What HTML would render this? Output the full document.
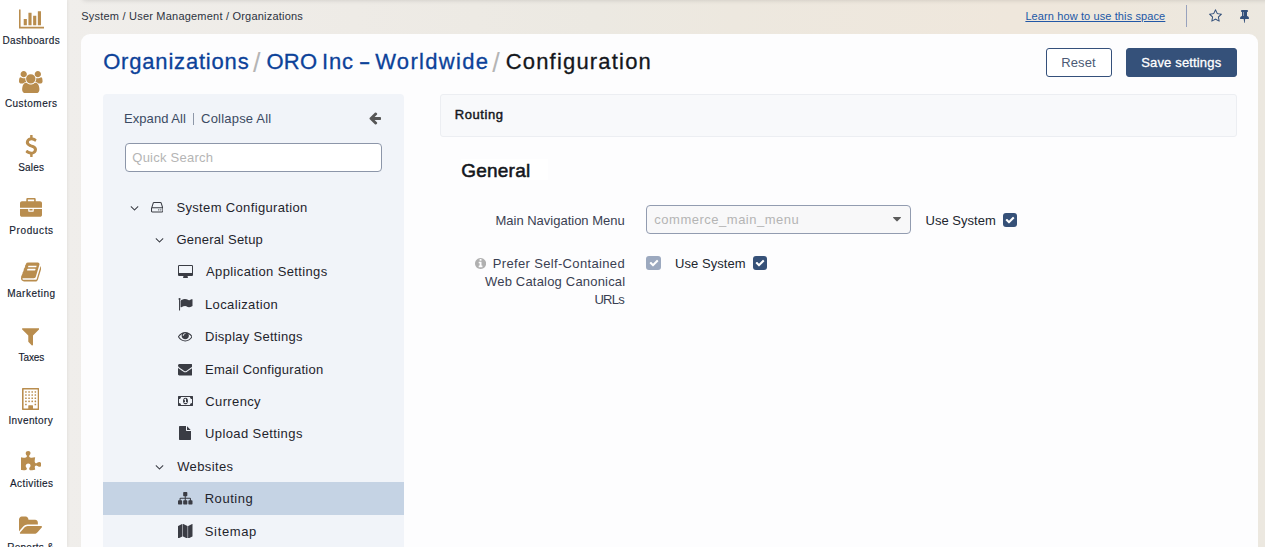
<!DOCTYPE html><html lang="en"><head>
<meta charset="utf-8">
<title>Configuration - ORO Inc - Worldwide - Organizations - User Management - System</title>
<style>
*{box-sizing:border-box;margin:0;padding:0}
html,body{width:1265px;height:547px;overflow:hidden}
body{font-family:"Liberation Sans", sans-serif;font-size:13px;color:#21262e;background:linear-gradient(90deg,#f0eeeb 5%,#eeebe6 28%,#ece9e2 47%,#ede8df 58%,#efe7dc 80%,#eee7dc 88%,#ece8e0 100%);position:relative}
.i{display:block;fill:currentColor;position:absolute}
.t{position:absolute;white-space:nowrap;line-height:18px;font-size:13px;font-weight:400}
a{text-decoration:none;color:inherit}
/* ---------- side menu ---------- */
#side{position:absolute;left:0;top:0;width:67px;height:547px;background:#fff;box-shadow:1px 0 3px rgba(0,0,0,.05);z-index:3}
#side .i{color:#b98d4e}
#side .t{font-size:10px;line-height:14px;color:#161c30;-webkit-text-stroke:.15px}
/* ---------- top bar ---------- */
#topshadow{position:absolute;left:83px;top:-10px;right:-20px;height:10px;background:#ddd;box-shadow:0 0 5px rgba(0,0,0,.16);z-index:1}
#crumbs{font-size:11px;line-height:14px;color:#2d3340}
#help{font-size:11px;line-height:14px;color:#2257a6;text-decoration:underline}
#vdiv{position:absolute;left:1186px;top:5px;width:1px;height:22px;background:#98a2bd}
#star,#pin{color:#33507b}
/* ---------- card ---------- */
#card{position:absolute;left:81px;top:34px;width:1177px;height:520px;background:#fdfdfe;border-radius:9px 9px 0 0}
#title .t{font-size:22px;line-height:30px;color:#14171c;-webkit-text-stroke:.3px}
#title a.t{color:#0c4299}
#title i.t{font-style:normal;color:#b5b5b5;font-size:27px;-webkit-text-stroke:0}
.btn{position:absolute;top:14px;height:29px;border-radius:3px}
#reset{left:965px;width:66px;border:1px solid #34507b;background:#fff}
#reset .t{color:#4b5a75}
#save{left:1045px;width:111px;border:1px solid #35517a;background:#35517a}
#save .t{color:#fff;-webkit-text-stroke:.3px}
/* ---------- left tree ---------- */
#tree{position:absolute;left:22px;top:60px;width:301px;height:470px;background:#f1f4f9;border-radius:4px 4px 0 0;overflow:hidden}
#tree .acts{color:#3b4a63}
#tree .bar{position:absolute;left:90px;top:18.5px;width:1px;height:12px;background:#8d97a8}
#tree .back .i{color:#565656}
#qs{position:absolute;left:22px;top:49px;width:257px;height:29px;border:1px solid #8c96a9;border-radius:4px;background:#fff}
#qs .t{color:#b5b5b5}
.sel{position:absolute;left:0;top:388px;width:301px;height:33px;background:#c5d3e4}
#tree .i{color:#3a3c44}
#tree .row{color:#1f242c}
/* ---------- right content ---------- */
#sect{position:absolute;left:359px;top:60px;width:797px;height:43px;background:#f8f9fb;border:1px solid #eceef2;border-radius:3px}
#secth{font-weight:400;-webkit-text-stroke:.45px #14171c;color:#14171c}
#gen{position:absolute;left:380px;top:125px;width:87px;height:21px;background:#fff}
#genh{font-size:19px;line-height:26px;font-weight:400;-webkit-text-stroke:.55px #14171c;color:#14171c}
.lbl{color:#3a3f52}
#sel{position:absolute;left:565px;top:171px;width:265px;height:29px;border:1px solid #929cb0;border-radius:4px;background:#f8f8f9}
#sel .t{color:#b4b4b4}
#sel .i{color:#5c5c5c}
.us{color:#21262e}
.cb{position:absolute;width:14px;height:14px;border-radius:3px;background:#365178;color:#fff}
.cb.dis{background:#9ca9bf}
#info{color:#b0b0b0}
</style>
</head>
<body>
<div id="topshadow"></div>
<div id="side">
  <svg class="i" style="left:19px;top:8px" width="25.14" height="22.00" viewBox="0 -1536 2048 1792"><path transform="scale(1 -1)" d="M640 640v-512h-256v512h256zM1024 1152v-1024h-256v1024h256zM2048 0v-128h-2048v1536h128v-1408h1920zM1408 896v-768h-256v768h256zM1792 1280v-1152h-256v1152h256z"></path></svg><span class="t" style="letter-spacing: 0.37px; left: 2.4px; top: 34px;">Dashboards</span>
  <svg class="i" style="left:19px;top:71px" width="23.57" height="22.00" viewBox="0 -1536 1920 1792"><path transform="scale(1 -1)" d="M593 640q-162 -5 -265 -128h-134q-82 0 -138 40.5t-56 118.5q0 353 124 353q6 0 43.5 -21t97.5 -42.5t119 -21.5q67 0 133 23q-5 -37 -5 -66q0 -139 81 -256zM1664 3q0 -120 -73 -189.5t-194 -69.5h-874q-121 0 -194 69.5t-73 189.5q0 53 3.5 103.5t14 109t26.5 108.5 t43 97.5t62 81t85.5 53.5t111.5 20q10 0 43 -21.5t73 -48t107 -48t135 -21.5t135 21.5t107 48t73 48t43 21.5q61 0 111.5 -20t85.5 -53.5t62 -81t43 -97.5t26.5 -108.5t14 -109t3.5 -103.5zM640 1280q0 -106 -75 -181t-181 -75t-181 75t-75 181t75 181t181 75t181 -75 t75 -181zM1344 896q0 -159 -112.5 -271.5t-271.5 -112.5t-271.5 112.5t-112.5 271.5t112.5 271.5t271.5 112.5t271.5 -112.5t112.5 -271.5zM1920 671q0 -78 -56 -118.5t-138 -40.5h-134q-103 123 -265 128q81 117 81 256q0 29 -5 66q66 -23 133 -23q59 0 119 21.5t97.5 42.5 t43.5 21q124 0 124 -353zM1792 1280q0 -106 -75 -181t-181 -75t-181 75t-75 181t75 181t181 75t181 -75t75 -181z"></path></svg><span class="t" style="letter-spacing: 0.47px; left: 4.9px; top: 97px;">Customers</span>
  <svg class="i" style="left:24.5px;top:135px" width="12.57" height="22.00" viewBox="0 -1536 1024 1792"><path transform="scale(1 -1)" d="M978 351q0 -153 -99.5 -263.5t-258.5 -136.5v-175q0 -14 -9 -23t-23 -9h-135q-13 0 -22.5 9.5t-9.5 22.5v175q-66 9 -127.5 31t-101.5 44.5t-74 48t-46.5 37.5t-17.5 18q-17 21 -2 41l103 135q7 10 23 12q15 2 24 -9l2 -2q113 -99 243 -125q37 -8 74 -8q81 0 142.5 43 t61.5 122q0 28 -15 53t-33.5 42t-58.5 37.5t-66 32t-80 32.5q-39 16 -61.5 25t-61.5 26.5t-62.5 31t-56.5 35.5t-53.5 42.5t-43.5 49t-35.5 58t-21 66.5t-8.5 78q0 138 98 242t255 134v180q0 13 9.5 22.5t22.5 9.5h135q14 0 23 -9t9 -23v-176q57 -6 110.5 -23t87 -33.5 t63.5 -37.5t39 -29t15 -14q17 -18 5 -38l-81 -146q-8 -15 -23 -16q-14 -3 -27 7q-3 3 -14.5 12t-39 26.5t-58.5 32t-74.5 26t-85.5 11.5q-95 0 -155 -43t-60 -111q0 -26 8.5 -48t29.5 -41.5t39.5 -33t56 -31t60.5 -27t70 -27.5q53 -20 81 -31.5t76 -35t75.5 -42.5t62 -50 t53 -63.5t31.5 -76.5t13 -94z"></path></svg><span class="t" style="letter-spacing: 0.15px; left: 18.3px; top: 161px;">Sales</span>
  <svg class="i" style="left:20px;top:198px" width="22.00" height="22.00" viewBox="0 -1536 1792 1792"><path transform="scale(1 -1)" d="M640 1280h512v128h-512v-128zM1792 640v-480q0 -66 -47 -113t-113 -47h-1472q-66 0 -113 47t-47 113v480h672v-160q0 -26 19 -45t45 -19h320q26 0 45 19t19 45v160h672zM1024 640v-128h-256v128h256zM1792 1120v-384h-1792v384q0 66 47 113t113 47h352v160q0 40 28 68 t68 28h576q40 0 68 -28t28 -68v-160h352q66 0 113 -47t47 -113z"></path></svg><span class="t" style="letter-spacing: 0.61px; left: 9.3px; top: 224px;">Products</span>
  <svg class="i" style="left:21px;top:261px" width="20.43" height="22.00" viewBox="0 -1536 1664 1792"><path transform="scale(1 -1)" d="M1639 1058q40 -57 18 -129l-275 -906q-19 -64 -76.5 -107.5t-122.5 -43.5h-923q-77 0 -148.5 53.5t-99.5 131.5q-24 67 -2 127q0 4 3 27t4 37q1 8 -3 21.5t-3 19.5q2 11 8 21t16.5 23.5t16.5 23.5q23 38 45 91.5t30 91.5q3 10 0.5 30t-0.5 28q3 11 17 28t17 23 q21 36 42 92t25 90q1 9 -2.5 32t0.5 28q4 13 22 30.5t22 22.5q19 26 42.5 84.5t27.5 96.5q1 8 -3 25.5t-2 26.5q2 8 9 18t18 23t17 21q8 12 16.5 30.5t15 35t16 36t19.5 32t26.5 23.5t36 11.5t47.5 -5.5l-1 -3q38 9 51 9h761q74 0 114 -56t18 -130l-274 -906 q-36 -119 -71.5 -153.5t-128.5 -34.5h-869q-27 0 -38 -15q-11 -16 -1 -43q24 -70 144 -70h923q29 0 56 15.5t35 41.5l300 987q7 22 5 57q38 -15 59 -43zM575 1056q-4 -13 2 -22.5t20 -9.5h608q13 0 25.5 9.5t16.5 22.5l21 64q4 13 -2 22.5t-20 9.5h-608q-13 0 -25.5 -9.5 t-16.5 -22.5zM492 800q-4 -13 2 -22.5t20 -9.5h608q13 0 25.5 9.5t16.5 22.5l21 64q4 13 -2 22.5t-20 9.5h-608q-13 0 -25.5 -9.5t-16.5 -22.5z"></path></svg><span class="t" style="letter-spacing: 0.5px; left: 7.2px; top: 287px;">Marketing</span>
  <svg class="i" style="left:22px;top:325px" width="17.29" height="22.00" viewBox="0 -1536 1408 1792"><path transform="scale(1 -1)" d="M1403 1241q17 -41 -14 -70l-493 -493v-742q0 -42 -39 -59q-13 -5 -25 -5q-27 0 -45 19l-256 256q-19 19 -19 45v486l-493 493q-31 29 -14 70q17 39 59 39h1280q42 0 59 -39z"></path></svg><span class="t" style="letter-spacing: -0.1px; left: 18.6px; top: 351px;">Taxes</span>
  <svg class="i" style="left:22px;top:388px" width="17.29" height="22.00" viewBox="0 -1536 1408 1792"><path transform="scale(1 -1)" d="M384 224v-64q0 -13 -9.5 -22.5t-22.5 -9.5h-64q-13 0 -22.5 9.5t-9.5 22.5v64q0 13 9.5 22.5t22.5 9.5h64q13 0 22.5 -9.5t9.5 -22.5zM384 480v-64q0 -13 -9.5 -22.5t-22.5 -9.5h-64q-13 0 -22.5 9.5t-9.5 22.5v64q0 13 9.5 22.5t22.5 9.5h64q13 0 22.5 -9.5t9.5 -22.5z M640 480v-64q0 -13 -9.5 -22.5t-22.5 -9.5h-64q-13 0 -22.5 9.5t-9.5 22.5v64q0 13 9.5 22.5t22.5 9.5h64q13 0 22.5 -9.5t9.5 -22.5zM384 736v-64q0 -13 -9.5 -22.5t-22.5 -9.5h-64q-13 0 -22.5 9.5t-9.5 22.5v64q0 13 9.5 22.5t22.5 9.5h64q13 0 22.5 -9.5t9.5 -22.5z M1152 224v-64q0 -13 -9.5 -22.5t-22.5 -9.5h-64q-13 0 -22.5 9.5t-9.5 22.5v64q0 13 9.5 22.5t22.5 9.5h64q13 0 22.5 -9.5t9.5 -22.5zM896 480v-64q0 -13 -9.5 -22.5t-22.5 -9.5h-64q-13 0 -22.5 9.5t-9.5 22.5v64q0 13 9.5 22.5t22.5 9.5h64q13 0 22.5 -9.5t9.5 -22.5z M640 736v-64q0 -13 -9.5 -22.5t-22.5 -9.5h-64q-13 0 -22.5 9.5t-9.5 22.5v64q0 13 9.5 22.5t22.5 9.5h64q13 0 22.5 -9.5t9.5 -22.5zM384 992v-64q0 -13 -9.5 -22.5t-22.5 -9.5h-64q-13 0 -22.5 9.5t-9.5 22.5v64q0 13 9.5 22.5t22.5 9.5h64q13 0 22.5 -9.5t9.5 -22.5z M1152 480v-64q0 -13 -9.5 -22.5t-22.5 -9.5h-64q-13 0 -22.5 9.5t-9.5 22.5v64q0 13 9.5 22.5t22.5 9.5h64q13 0 22.5 -9.5t9.5 -22.5zM896 736v-64q0 -13 -9.5 -22.5t-22.5 -9.5h-64q-13 0 -22.5 9.5t-9.5 22.5v64q0 13 9.5 22.5t22.5 9.5h64q13 0 22.5 -9.5t9.5 -22.5z M640 992v-64q0 -13 -9.5 -22.5t-22.5 -9.5h-64q-13 0 -22.5 9.5t-9.5 22.5v64q0 13 9.5 22.5t22.5 9.5h64q13 0 22.5 -9.5t9.5 -22.5zM384 1248v-64q0 -13 -9.5 -22.5t-22.5 -9.5h-64q-13 0 -22.5 9.5t-9.5 22.5v64q0 13 9.5 22.5t22.5 9.5h64q13 0 22.5 -9.5t9.5 -22.5z M1152 736v-64q0 -13 -9.5 -22.5t-22.5 -9.5h-64q-13 0 -22.5 9.5t-9.5 22.5v64q0 13 9.5 22.5t22.5 9.5h64q13 0 22.5 -9.5t9.5 -22.5zM896 992v-64q0 -13 -9.5 -22.5t-22.5 -9.5h-64q-13 0 -22.5 9.5t-9.5 22.5v64q0 13 9.5 22.5t22.5 9.5h64q13 0 22.5 -9.5t9.5 -22.5z M640 1248v-64q0 -13 -9.5 -22.5t-22.5 -9.5h-64q-13 0 -22.5 9.5t-9.5 22.5v64q0 13 9.5 22.5t22.5 9.5h64q13 0 22.5 -9.5t9.5 -22.5zM1152 992v-64q0 -13 -9.5 -22.5t-22.5 -9.5h-64q-13 0 -22.5 9.5t-9.5 22.5v64q0 13 9.5 22.5t22.5 9.5h64q13 0 22.5 -9.5t9.5 -22.5z M896 1248v-64q0 -13 -9.5 -22.5t-22.5 -9.5h-64q-13 0 -22.5 9.5t-9.5 22.5v64q0 13 9.5 22.5t22.5 9.5h64q13 0 22.5 -9.5t9.5 -22.5zM1152 1248v-64q0 -13 -9.5 -22.5t-22.5 -9.5h-64q-13 0 -22.5 9.5t-9.5 22.5v64q0 13 9.5 22.5t22.5 9.5h64q13 0 22.5 -9.5t9.5 -22.5z M896 -128h384v1536h-1152v-1536h384v224q0 13 9.5 22.5t22.5 9.5h320q13 0 22.5 -9.5t9.5 -22.5v-224zM1408 1472v-1664q0 -26 -19 -45t-45 -19h-1280q-26 0 -45 19t-19 45v1664q0 26 19 45t45 19h1280q26 0 45 -19t19 -45z"></path></svg><span class="t" style="letter-spacing: 0.4px; left: 8.4px; top: 414px;">Inventory</span>
  <svg class="i" style="left:20.5px;top:451px" width="20.43" height="22.00" viewBox="0 -1536 1664 1792"><path transform="scale(1 -1)" d="M1664 438q0 -81 -44.5 -135t-123.5 -54q-41 0 -77.5 17.5t-59 38t-56.5 38t-71 17.5q-110 0 -110 -124q0 -39 16 -115t15 -115v-5q-22 0 -33 -1q-34 -3 -97.5 -11.5t-115.5 -13.5t-98 -5q-61 0 -103 26.5t-42 83.5q0 37 17.5 71t38 56.5t38 59t17.5 77.5q0 79 -54 123.5 t-135 44.5q-84 0 -143 -45.5t-59 -127.5q0 -43 15 -83t33.5 -64.5t33.5 -53t15 -50.5q0 -45 -46 -89q-37 -35 -117 -35q-95 0 -245 24q-9 2 -27.5 4t-27.5 4l-13 2q-1 0 -3 1q-2 0 -2 1v1024q2 -1 17.5 -3.5t34 -5t21.5 -3.5q150 -24 245 -24q80 0 117 35q46 44 46 89 q0 22 -15 50.5t-33.5 53t-33.5 64.5t-15 83q0 82 59 127.5t144 45.5q80 0 134 -44.5t54 -123.5q0 -41 -17.5 -77.5t-38 -59t-38 -56.5t-17.5 -71q0 -57 42 -83.5t103 -26.5q64 0 180 15t163 17v-2q-1 -2 -3.5 -17.5t-5 -34t-3.5 -21.5q-24 -150 -24 -245q0 -80 35 -117 q44 -46 89 -46q22 0 50.5 15t53 33.5t64.5 33.5t83 15q82 0 127.5 -59t45.5 -143z"></path></svg><span class="t" style="letter-spacing: 0.4px; left: 10px; top: 477px;">Activities</span>
  <svg class="i" style="left:19px;top:514.7px" width="23.57" height="22.00" viewBox="0 -1536 1920 1792"><path transform="scale(1 -1)" d="M1879 584q0 -31 -31 -66l-336 -396q-43 -51 -120.5 -86.5t-143.5 -35.5h-1088q-34 0 -60.5 13t-26.5 43q0 31 31 66l336 396q43 51 120.5 86.5t143.5 35.5h1088q34 0 60.5 -13t26.5 -43zM1536 928v-160h-832q-94 0 -197 -47.5t-164 -119.5l-337 -396l-5 -6q0 4 -0.5 12.5 t-0.5 12.5v960q0 92 66 158t158 66h320q92 0 158 -66t66 -158v-32h544q92 0 158 -66t66 -158z"></path></svg><span class="t" style="letter-spacing: 0.26px; left: 7.2px; top: 541px;">Reports &amp;</span>
</div>
<span class="t" id="crumbs" style="letter-spacing: 0.21px; left: 81.3px; top: 9px;">System / User Management / Organizations</span>
<a class="t" id="help" style="letter-spacing: 0.11px; left: 1025.4px; top: 9px;">Learn how to use this space</a>
<div id="vdiv"></div>
<div id="star"><svg class="i" style="left:1208.7px;top:9px" width="13.00" height="14.00" viewBox="0 -1536 1664 1792"><path transform="scale(1 -1)" d="M1137 532l306 297l-422 62l-189 382l-189 -382l-422 -62l306 -297l-73 -421l378 199l377 -199zM1664 889q0 -22 -26 -48l-363 -354l86 -500q1 -7 1 -20q0 -50 -41 -50q-19 0 -40 12l-449 236l-449 -236q-22 -12 -40 -12q-21 0 -31.5 14.5t-10.5 35.5q0 6 2 20l86 500 l-364 354q-25 27 -25 48q0 37 56 46l502 73l225 455q19 41 49 41t49 -41l225 -455l502 -73q56 -9 56 -46z"></path></svg></div>
<div id="pin"><svg class="i" style="left:1239.7px;top:9px" width="9.00" height="14.00" viewBox="0 -1536 1152 1792"><path transform="scale(1 -1)" d="M480 672v448q0 14 -9 23t-23 9t-23 -9t-9 -23v-448q0 -14 9 -23t23 -9t23 9t9 23zM1152 320q0 -26 -19 -45t-45 -19h-429l-51 -483q-2 -12 -10.5 -20.5t-20.5 -8.5h-1q-27 0 -32 27l-76 485h-404q-26 0 -45 19t-19 45q0 123 78.5 221.5t177.5 98.5v512q-52 0 -90 38 t-38 90t38 90t90 38h640q52 0 90 -38t38 -90t-38 -90t-90 -38v-512q99 0 177.5 -98.5t78.5 -221.5z"></path></svg></div>

<div id="card">
  <h1 id="title">
    <a class="t" style="letter-spacing: 0.81px; left: 22.2px; top: 13px;">Organizations</a>
    <i class="t" style="letter-spacing: 0px; left: 172px; top: 14px;">/</i>
    <a class="t" style="letter-spacing: 0.15px; left: 185.6px; top: 13px;">ORO</a>
    <a class="t" style="letter-spacing: 0.78px; left: 241.1px; top: 13px;">Inc</a>
    <a class="t" style="transform: scaleX(1.6); letter-spacing: 0px; left: 279.8px; top: 13px;">-</a>
    <a class="t" style="letter-spacing: 1.31px; left: 294.2px; top: 13px;">Worldwide</a>
    <i class="t" style="letter-spacing: 0px; left: 411.3px; top: 14px;">/</i>
    <span class="t" style="letter-spacing: 1.19px; left: 424.7px; top: 13px;">Configuration</span>
  </h1>
  <a class="btn" id="reset"><span class="t" style="letter-spacing: 0.11px; left: 14.2px; top: 5px;">Reset</span></a>
  <a class="btn" id="save"><span class="t" style="letter-spacing: 0.16px; left: 14.2px; top: 5px;">Save settings</span></a>

  <div id="tree">
    <div class="sel"></div>
    <a class="t acts" style="letter-spacing: 0.04px; left: 21.1px; top: 16px;">Expand All</a>
    <div class="bar"></div>
    <a class="t acts" style="letter-spacing: 0.2px; left: 98.1px; top: 16px;">Collapse All</a>
    <div class="back"><svg class="i" style="left:265.9px;top:16.5px" width="12.00" height="14.00" viewBox="0 -1536 1536 1792"><path transform="scale(1 -1)" d="M1536 640v-128q0 -53 -32.5 -90.5t-84.5 -37.5h-704l293 -294q38 -36 38 -90t-38 -90l-75 -76q-37 -37 -90 -37q-52 0 -91 37l-651 652q-37 37 -37 90q0 52 37 91l651 650q38 38 91 38q52 0 90 -38l75 -74q38 -38 38 -91t-38 -91l-293 -293h704q52 0 84.5 -37.5 t32.5 -90.5z"></path></svg></div>
    <div id="qs"><span class="t" style="letter-spacing: 0.24px; left: 6.3px; top: 5px;">Quick Search</span></div>

    <svg class="i" style="left:26.5px;top:107px" width="9.00" height="14.00" viewBox="0 -1536 1152 1792"><path transform="scale(1 -1)" d="M1075 800q0 -13 -10 -23l-466 -466q-10 -10 -23 -10t-23 10l-466 466q-10 10 -10 23t10 23l50 50q10 10 23 10t23 -10l393 -393l393 393q10 10 23 10t23 -10l50 -50q10 -10 10 -23z"></path></svg><svg class="i" style="left:47.6px;top:105.6px" width="12.43" height="14.50" viewBox="0 -1536 1536 1792"><path transform="scale(1 -1)" d="M1040 320q0 -33 -23.5 -56.5t-56.5 -23.5t-56.5 23.5t-23.5 56.5t23.5 56.5t56.5 23.5t56.5 -23.5t23.5 -56.5zM1296 320q0 -33 -23.5 -56.5t-56.5 -23.5t-56.5 23.5t-23.5 56.5t23.5 56.5t56.5 23.5t56.5 -23.5t23.5 -56.5zM1408 160v320q0 13 -9.5 22.5t-22.5 9.5 h-1216q-13 0 -22.5 -9.5t-9.5 -22.5v-320q0 -13 9.5 -22.5t22.5 -9.5h1216q13 0 22.5 9.5t9.5 22.5zM178 640h1180l-157 482q-4 13 -16 21.5t-26 8.5h-782q-14 0 -26 -8.5t-16 -21.5zM1536 480v-320q0 -66 -47 -113t-113 -47h-1216q-66 0 -113 47t-47 113v320q0 25 16 75 l197 606q17 53 63 86t101 33h782q55 0 101 -33t63 -86l197 -606q16 -50 16 -75z"></path></svg>
    <span class="t row" style="letter-spacing: 0.35px; left: 73.4px; top: 105px;">System Configuration</span>
    <svg class="i" style="left:51.5px;top:139px" width="9.00" height="14.00" viewBox="0 -1536 1152 1792"><path transform="scale(1 -1)" d="M1075 800q0 -13 -10 -23l-466 -466q-10 -10 -23 -10t-23 10l-466 466q-10 10 -10 23t10 23l50 50q10 10 23 10t23 -10l393 -393l393 393q10 10 23 10t23 -10l50 -50q10 -10 10 -23z"></path></svg>
    <span class="t row" style="letter-spacing: 0.21px; left: 73.5px; top: 137px;">General Setup</span>
    <svg class="i" style="left:75px;top:171px" width="15.00" height="14.00" viewBox="0 -1536 1920 1792"><path transform="scale(1 -1)" d="M1792 544v832q0 13 -9.5 22.5t-22.5 9.5h-1600q-13 0 -22.5 -9.5t-9.5 -22.5v-832q0 -13 9.5 -22.5t22.5 -9.5h1600q13 0 22.5 9.5t9.5 22.5zM1920 1376v-1088q0 -66 -47 -113t-113 -47h-544q0 -37 16 -77.5t32 -71t16 -43.5q0 -26 -19 -45t-45 -19h-512q-26 0 -45 19 t-19 45q0 14 16 44t32 70t16 78h-544q-66 0 -113 47t-47 113v1088q0 66 47 113t113 47h1600q66 0 113 -47t47 -113z"></path></svg>
    <span class="t row" style="letter-spacing: 0.37px; left: 103px; top: 169px;">Application Settings</span>
    <svg class="i" style="left:75px;top:202.7px" width="14.50" height="14.50" viewBox="0 -1536 1792 1792"><path transform="scale(1 -1)" d="M320 1280q0 -72 -64 -110v-1266q0 -13 -9.5 -22.5t-22.5 -9.5h-64q-13 0 -22.5 9.5t-9.5 22.5v1266q-64 38 -64 110q0 53 37.5 90.5t90.5 37.5t90.5 -37.5t37.5 -90.5zM1792 1216v-763q0 -25 -12.5 -38.5t-39.5 -27.5q-215 -116 -369 -116q-61 0 -123.5 22t-108.5 48 t-115.5 48t-142.5 22q-192 0 -464 -146q-17 -9 -33 -9q-26 0 -45 19t-19 45v742q0 32 31 55q21 14 79 43q236 120 421 120q107 0 200 -29t219 -88q38 -19 88 -19q54 0 117.5 21t110 47t88 47t54.5 21q26 0 45 -19t19 -45z"></path></svg>
    <span class="t row" style="letter-spacing: 0.37px; left: 102px; top: 202px;">Localization</span>
    <svg class="i" style="left:74.8px;top:234.7px" width="14.50" height="14.50" viewBox="0 -1536 1792 1792"><path transform="scale(1 -1)" d="M1664 576q-152 236 -381 353q61 -104 61 -225q0 -185 -131.5 -316.5t-316.5 -131.5t-316.5 131.5t-131.5 316.5q0 121 61 225q-229 -117 -381 -353q133 -205 333.5 -326.5t434.5 -121.5t434.5 121.5t333.5 326.5zM944 960q0 20 -14 34t-34 14q-125 0 -214.5 -89.5 t-89.5 -214.5q0 -20 14 -34t34 -14t34 14t14 34q0 86 61 147t147 61q20 0 34 14t14 34zM1792 576q0 -34 -20 -69q-140 -230 -376.5 -368.5t-499.5 -138.5t-499.5 139t-376.5 368q-20 35 -20 69t20 69q140 229 376.5 368t499.5 139t499.5 -139t376.5 -368q20 -35 20 -69z"></path></svg>
    <span class="t row" style="letter-spacing: 0.28px; left: 102px; top: 234px;">Display Settings</span>
    <svg class="i" style="left:74.8px;top:267.7px" width="14.50" height="14.50" viewBox="0 -1536 1792 1792"><path transform="scale(1 -1)" d="M1792 826v-794q0 -66 -47 -113t-113 -47h-1472q-66 0 -113 47t-47 113v794q44 -49 101 -87q362 -246 497 -345q57 -42 92.5 -65.5t94.5 -48t110 -24.5h1h1q51 0 110 24.5t94.5 48t92.5 65.5q170 123 498 345q57 39 100 87zM1792 1120q0 -79 -49 -151t-122 -123 q-376 -261 -468 -325q-10 -7 -42.5 -30.5t-54 -38t-52 -32.5t-57.5 -27t-50 -9h-1h-1q-23 0 -50 9t-57.5 27t-52 32.5t-54 38t-42.5 30.5q-91 64 -262 182.5t-205 142.5q-62 42 -117 115.5t-55 136.5q0 78 41.5 130t118.5 52h1472q65 0 112.5 -47t47.5 -113z"></path></svg>
    <span class="t row" style="letter-spacing: 0.26px; left: 102px; top: 267px;">Email Configuration</span>
    <svg class="i" style="left:74.5px;top:300px" width="15.00" height="14.00" viewBox="0 -1536 1920 1792"><path transform="scale(1 -1)" d="M768 384h384v96h-128v448h-114l-148 -137l77 -80q42 37 55 57h2v-288h-128v-96zM1280 640q0 -70 -21 -142t-59.5 -134t-101.5 -101t-138 -39t-138 39t-101.5 101t-59.5 134t-21 142t21 142t59.5 134t101.5 101t138 39t138 -39t101.5 -101t59.5 -134t21 -142zM1792 384 v512q-106 0 -181 75t-75 181h-1152q0 -106 -75 -181t-181 -75v-512q106 0 181 -75t75 -181h1152q0 106 75 181t181 75zM1920 1216v-1152q0 -26 -19 -45t-45 -19h-1792q-26 0 -45 19t-19 45v1152q0 26 19 45t45 19h1792q26 0 45 -19t19 -45z"></path></svg>
    <span class="t row" style="letter-spacing: 0.37px; left: 102.3px; top: 299px;">Currency</span>
    <svg class="i" style="left:75.5px;top:332px" width="12.00" height="14.00" viewBox="0 -1536 1536 1792"><path transform="scale(1 -1)" d="M1024 1024v472q22 -14 36 -28l408 -408q14 -14 28 -36h-472zM896 992q0 -40 28 -68t68 -28h544v-1056q0 -40 -28 -68t-68 -28h-1344q-40 0 -68 28t-28 68v1600q0 40 28 68t68 28h800v-544z"></path></svg>
    <span class="t row" style="letter-spacing: 0.4px; left: 102px; top: 331px;">Upload Settings</span>
    <svg class="i" style="left:51.5px;top:366px" width="9.00" height="14.00" viewBox="0 -1536 1152 1792"><path transform="scale(1 -1)" d="M1075 800q0 -13 -10 -23l-466 -466q-10 -10 -23 -10t-23 10l-466 466q-10 10 -10 23t10 23l50 50q10 10 23 10t23 -10l393 -393l393 393q10 10 23 10t23 -10l50 -50q10 -10 10 -23z"></path></svg>
    <span class="t row" style="letter-spacing: 0.37px; left: 74.2px; top: 364px;">Websites</span>
    <svg class="i" style="left:75px;top:396.7px" width="14.50" height="14.50" viewBox="0 -1536 1792 1792"><path transform="scale(1 -1)" d="M1792 288v-320q0 -40 -28 -68t-68 -28h-320q-40 0 -68 28t-28 68v320q0 40 28 68t68 28h96v192h-512v-192h96q40 0 68 -28t28 -68v-320q0 -40 -28 -68t-68 -28h-320q-40 0 -68 28t-28 68v320q0 40 28 68t68 28h96v192h-512v-192h96q40 0 68 -28t28 -68v-320 q0 -40 -28 -68t-68 -28h-320q-40 0 -68 28t-28 68v320q0 40 28 68t68 28h96v192q0 52 38 90t90 38h512v192h-96q-40 0 -68 28t-28 68v320q0 40 28 68t68 28h320q40 0 68 -28t28 -68v-320q0 -40 -28 -68t-68 -28h-96v-192h512q52 0 90 -38t38 -90v-192h96q40 0 68 -28t28 -68 z"></path></svg>
    <span class="t row" style="letter-spacing: 0.54px; left: 101.7px; top: 396px;">Routing</span>
    <svg class="i" style="left:75px;top:429.7px" width="14.50" height="14.50" viewBox="0 -1536 1792 1792"><path transform="scale(1 -1)" d="M512 1536q13 0 22.5 -9.5t9.5 -22.5v-1472q0 -20 -17 -28l-480 -256q-7 -4 -15 -4q-13 0 -22.5 9.5t-9.5 22.5v1472q0 20 17 28l480 256q7 4 15 4zM1760 1536q13 0 22.5 -9.5t9.5 -22.5v-1472q0 -20 -17 -28l-480 -256q-7 -4 -15 -4q-13 0 -22.5 9.5t-9.5 22.5v1472 q0 20 17 28l480 256q7 4 15 4zM640 1536q8 0 14 -3l512 -256q18 -10 18 -29v-1472q0 -13 -9.5 -22.5t-22.5 -9.5q-8 0 -14 3l-512 256q-18 10 -18 29v1472q0 13 9.5 22.5t22.5 9.5z"></path></svg>
    <span class="t row" style="letter-spacing: 0.64px; left: 101.8px; top: 429px;">Sitemap</span>
  </div>

  <div id="sect"></div>
  <span class="t" id="secth" style="letter-spacing: 0.57px; left: 373.8px; top: 72px;">Routing</span>
  <div id="gen"></div>
  <span class="t" id="genh" style="letter-spacing: 0.23px; left: 380.2px; top: 124px;">General</span>

  <span class="t lbl" style="letter-spacing: -0.01px; left: 414.5px; top: 178px;">Main Navigation Menu</span>
  <div id="sel"><span class="t" style="letter-spacing: 0.51px; left: 7.3px; top: 5px;">commerce_main_menu</span><svg class="i" style="left:245.5px;top:6.3px" width="8.00" height="14.00" viewBox="0 -1536 1024 1792"><path transform="scale(1 -1)" d="M1024 832q0 -26 -19 -45l-448 -448q-19 -19 -45 -19t-45 19l-448 448q-19 19 -19 45t19 45t45 19h896q26 0 45 -19t19 -45z"></path></svg></div>
  <span class="t us" style="letter-spacing: 0.02px; left: 844.5px; top: 178px;">Use System</span>
  <div class="cb" style="left:922px;top:179px"><svg class="i" style="left:2px;top:2px" width="10.00" height="10.00" viewBox="0 -1536 1792 1792"><path transform="scale(1 -1)" d="M1671 970q0 -40 -28 -68l-724 -724l-136 -136q-28 -28 -68 -28t-68 28l-136 136l-362 362q-28 28 -28 68t28 68l136 136q28 28 68 28t68 -28l294 -295l656 657q28 28 68 28t68 -28l136 -136q28 -28 28 -68z"></path></svg></div>

  <div id="info"><svg class="i" style="left:393.5px;top:222.5px" width="11.14" height="13.00" viewBox="0 -1536 1536 1792"><path transform="scale(1 -1)" d="M1024 160v160q0 14 -9 23t-23 9h-96v512q0 14 -9 23t-23 9h-320q-14 0 -23 -9t-9 -23v-160q0 -14 9 -23t23 -9h96v-320h-96q-14 0 -23 -9t-9 -23v-160q0 -14 9 -23t23 -9h448q14 0 23 9t9 23zM896 1056v160q0 14 -9 23t-23 9h-192q-14 0 -23 -9t-9 -23v-160q0 -14 9 -23 t23 -9h192q14 0 23 9t9 23zM1536 640q0 -209 -103 -385.5t-279.5 -279.5t-385.5 -103t-385.5 103t-279.5 279.5t-103 385.5t103 385.5t279.5 279.5t385.5 103t385.5 -103t279.5 -279.5t103 -385.5z"></path></svg></div>
  <span class="t lbl" style="letter-spacing: 0.34px; left: 411.8px; top: 221px;">Prefer Self-Contained</span>
  <span class="t lbl" style="letter-spacing: 0.19px; left: 404px; top: 239px;">Web Catalog Canonical</span>
  <span class="t lbl" style="letter-spacing: -0.73px; left: 513.4px; top: 257px;">URLs</span>
  <div class="cb dis" style="left:565px;top:222px;width:15px"><svg class="i" style="left:2.5px;top:2px" width="10.00" height="10.00" viewBox="0 -1536 1792 1792"><path transform="scale(1 -1)" d="M1671 970q0 -40 -28 -68l-724 -724l-136 -136q-28 -28 -68 -28t-68 28l-136 136l-362 362q-28 28 -28 68t28 68l136 136q28 28 68 28t68 -28l294 -295l656 657q28 28 68 28t68 -28l136 -136q28 -28 28 -68z"></path></svg></div>
  <span class="t us" style="letter-spacing: 0.06px; left: 594px; top: 221px;">Use System</span>
  <div class="cb" style="left:672px;top:222px"><svg class="i" style="left:2px;top:2px" width="10.00" height="10.00" viewBox="0 -1536 1792 1792"><path transform="scale(1 -1)" d="M1671 970q0 -40 -28 -68l-724 -724l-136 -136q-28 -28 -68 -28t-68 28l-136 136l-362 362q-28 28 -28 68t28 68l136 136q28 28 68 28t68 -28l294 -295l656 657q28 28 68 28t68 -28l136 -136q28 -28 28 -68z"></path></svg></div>
</div>


</body></html>
